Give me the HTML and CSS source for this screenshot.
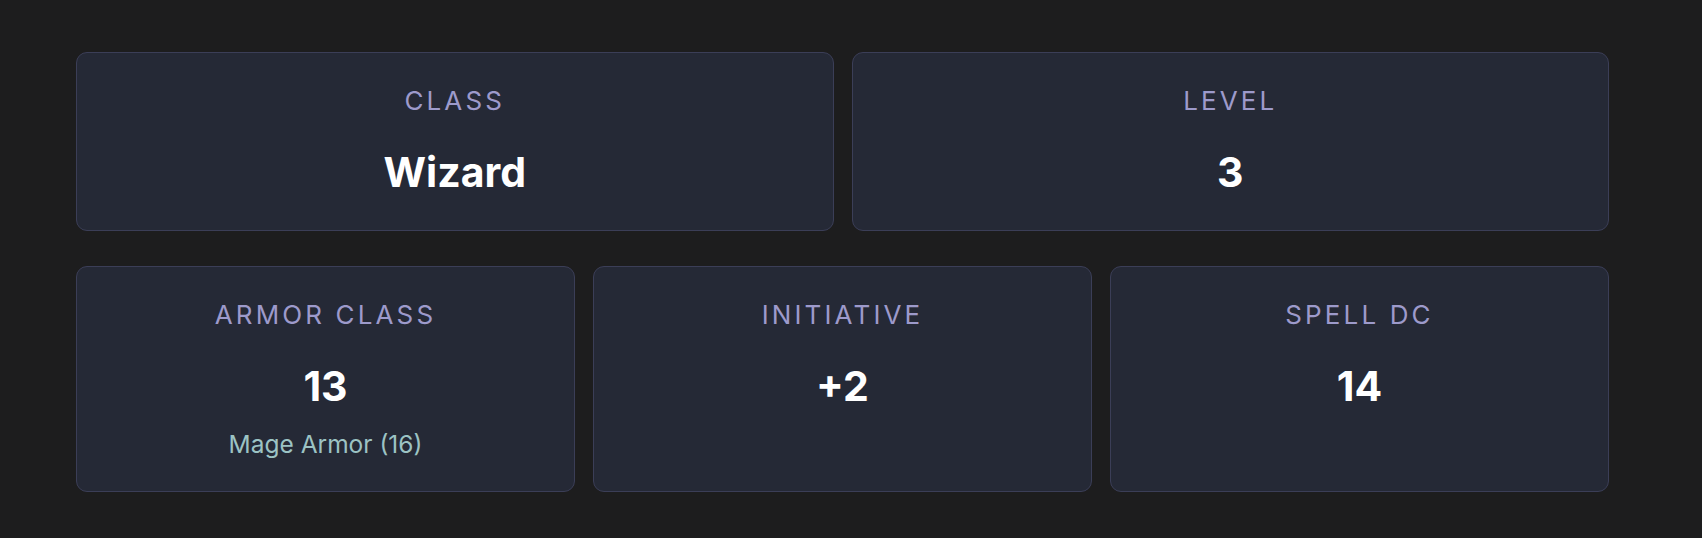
FILE: index.html
```html
<!DOCTYPE html>
<html lang="en">
<head>
<meta charset="utf-8">
<title>Character Stats</title>
<link rel="stylesheet" href="styles.css">
</head>
<body>
<main class="sheet">
  <section class="row row-two">
    <div class="card">
      <div class="label">Class</div>
      <div class="value">Wizard</div>
    </div>
    <div class="card">
      <div class="label">Level</div>
      <div class="value">3</div>
    </div>
  </section>
  <section class="row row-three">
    <div class="card">
      <div class="label">Armor Class</div>
      <div class="value">13</div>
      <div class="sub">Mage Armor (16)</div>
    </div>
    <div class="card">
      <div class="label">Initiative</div>
      <div class="value">+2</div>
    </div>
    <div class="card">
      <div class="label">Spell DC</div>
      <div class="value">14</div>
    </div>
  </section>
</main>
</body>
</html>
```
FILE: styles.css
```css
html, body {
  margin: 0;
  padding: 0;
  background: #1d1d1e;
}
body {
  font-family: Inter, "Noto Sans", "Liberation Sans", sans-serif;
  color: #ffffff;
}
.sheet {
  width: 1533px;
  padding: 52px 0 0 76px;
  display: flex;
  flex-direction: column;
  gap: 35px;
}
.row {
  display: grid;
  gap: 18px;
}
.row-two {
  grid-template-columns: 1fr 1fr;
}
.row-three {
  grid-template-columns: 1fr 1fr 1fr;
}
.card {
  background: #252936;
  border: 1px solid #3b3e57;
  border-radius: 11px;
  padding: 32px 20px 33px;
  text-align: center;
}
.label {
  font-size: 26px;
  line-height: 32px;
  font-weight: 400;
  letter-spacing: 0.12em;
  text-transform: uppercase;
  color: #9d9acb;
  margin-bottom: 30px;
}
.value {
  font-size: 41px;
  line-height: 50px;
  font-weight: 700;
  color: #ffffff;
}
.sub {
  margin-top: 19px;
  font-size: 24.5px;
  line-height: 28px;
  color: #9cc3c4;
}
```
